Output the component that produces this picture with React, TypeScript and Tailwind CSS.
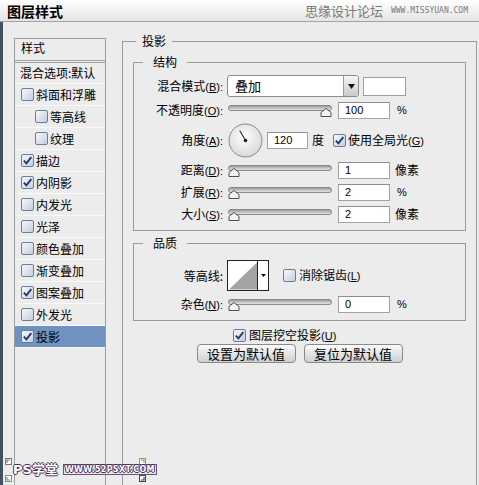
import React from 'react';

// Photoshop "图层样式" dialog — 投影 page

function Check({ on }: { on?: boolean }) {
  return (
    <span className="w-[13px] h-[13px] shrink-0 rounded-[2px] border border-[#6b7d97] bg-linear-to-br from-[#f7f9fc] to-[#c3cede] flex items-center justify-center">
      {on && (
        <svg width="11" height="11" viewBox="0 0 11 11">
          <path d="M1.8 5.6 L4.4 8.3 L9.3 2.2" fill="none" stroke="#22396a" strokeWidth="1.9" />
        </svg>
      )}
    </span>
  );
}

function Key({ k }: { k: string }) {
  return (
    <span className="text-[11px] font-['Liberation_Sans',sans-serif]">
      (<span className="underline">{k}</span>):
    </span>
  );
}

function Slider({ pos }: { pos: number }) {
  const x = 6 + pos * 92;
  return (
    <svg width="104" height="16" viewBox="0 0 104 16" className="ml-[5px] shrink-0">
      <defs>
        <linearGradient id="trk" x1="0" y1="0" x2="0" y2="1">
          <stop offset="0" stopColor="#8e8e8e" />
          <stop offset="0.5" stopColor="#c4c4c4" />
          <stop offset="1" stopColor="#e6e6e6" />
        </linearGradient>
      </defs>
      <rect x="0.5" y="3.5" width="103" height="5" rx="2.5" fill="url(#trk)" stroke="#8a8a8a" />
      <path d={`M${x} 6.5 L${x + 5} 10.5 L${x + 5} 14.5 L${x - 5} 14.5 L${x - 5} 10.5 Z`} fill="#f3f3f3" stroke="#4f4f4f" />
    </svg>
  );
}

function Field({ value, w = 'w-[52px]' }: { value: string; w?: string }) {
  return (
    <div className={`${w} h-[17px] shrink-0 bg-white border border-[#a3a3a3] border-t-[#8e8e8e] pl-[6px] flex items-center text-[11px] font-['Liberation_Sans',sans-serif]`}>
      {value}
    </div>
  );
}

function Label({ children }: { children: React.ReactNode }) {
  return <div className="w-[81px] shrink-0 text-right whitespace-nowrap">{children}</div>;
}

function SliderRow({ label, k, pos, value, unit }: { label: string; k: string; pos: number; value: string; unit: string }) {
  return (
    <div className="flex items-center h-[18px] mt-[4px]">
      <Label>
        {label}
        <Key k={k} />
      </Label>
      <Slider pos={pos} />
      <div className="ml-[6px]">
        <Field value={value} />
      </div>
      <span className={unit === '%' ? "ml-[7px] text-[11px] font-['Liberation_Sans',sans-serif]" : 'ml-[5px]'}>{unit}</span>
    </div>
  );
}

function Dial() {
  return (
    <svg width="35" height="35" viewBox="0 0 35 35" className="ml-[5px] shrink-0">
      <defs>
        <radialGradient id="dial" cx="0.45" cy="0.4" r="0.7">
          <stop offset="0" stopColor="#ffffff" />
          <stop offset="1" stopColor="#d2d2d2" />
        </radialGradient>
      </defs>
      <circle cx="17.5" cy="17.5" r="16.5" fill="url(#dial)" stroke="#8a8a8a" />
      <line x1="17.5" y1="17.5" x2="11.7" y2="7.5" stroke="#333" strokeWidth="1.2" />
      <circle cx="17.5" cy="17.5" r="1.8" fill="#222" />
    </svg>
  );
}

const styles: { label: string; on?: boolean; indent?: boolean; active?: boolean }[] = [
  { label: '斜面和浮雕' },
  { label: '等高线', indent: true },
  { label: '纹理', indent: true },
  { label: '描边', on: true },
  { label: '内阴影', on: true },
  { label: '内发光' },
  { label: '光泽' },
  { label: '颜色叠加' },
  { label: '渐变叠加' },
  { label: '图案叠加', on: true },
  { label: '外发光' },
  { label: '投影', on: true, active: true },
];

function LeftPanel() {
  return (
    <div className="mt-[16px] w-[92px] h-[460px] shrink-0 border border-[#9c9c9c]">
      <div className="h-[24px] pl-[6px] pb-[3px] flex items-center border-b-[3px] border-double border-[#a2a2a2]">样式</div>
      <div className="h-[21px] pl-[5px] flex items-center border-b border-[#fafafa] whitespace-nowrap">混合选项:默认</div>
      {styles.map((s) => (
        <div
          key={s.label}
          className={`h-[22px] flex items-center gap-[2px] border-b border-[#fafafa] ${s.indent ? 'pl-[20px]' : 'pl-[6px]'} ${s.active ? 'bg-[#6f92c0]' : ''}`}
        >
          <Check on={s.on} />
          <span>{s.label}</span>
        </div>
      ))}
    </div>
  );
}

function RightPanel() {
  return (
    <fieldset className="ml-[16px] mt-[11px] w-[355px] h-[470px] shrink-0 border border-[#9b9b9b] px-[10px] min-w-0">
      <legend className="ml-[3px] px-[6px] leading-[16px]">投影</legend>

      <fieldset className="mt-[5px] border border-[#9b9b9b] pl-[8px] pr-[8px] pb-[7px] min-w-0">
        <legend className="ml-[1px] px-[10px] leading-[16px]">结构</legend>

        <div className="flex items-center h-[22px] mt-[5px]">
          <Label>
            混合模式<Key k="B" />
          </Label>
          <div className="ml-[4px] w-[132px] h-[22px] shrink-0 flex border border-[#8c8c8c] rounded-[3px] bg-white overflow-hidden">
            <div className="flex-1 pl-[7px] flex items-center text-[13px]">叠加</div>
            <div className="w-[15px] border-l border-[#9a9a9a] bg-linear-to-b from-[#f6f6f6] to-[#c9c9c9] flex items-center justify-center">
              <svg width="7" height="5" viewBox="0 0 7 5">
                <path d="M0 0 L7 0 L3.5 5 Z" fill="#111" />
              </svg>
            </div>
          </div>
          <div className="ml-[4px] w-[43px] h-[19px] bg-white border border-[#9d9d9d]" />
        </div>

        <div className="flex items-center h-[18px] mt-[4px]">
          <Label>
            不透明度<Key k="O" />
          </Label>
          <Slider pos={1} />
          <div className="ml-[6px]">
            <Field value="100" />
          </div>
          <span className="ml-[7px] text-[11px] font-['Liberation_Sans',sans-serif]">%</span>
        </div>

        <div className="flex items-center h-[34px] mt-[4px]">
          <Label>
            角度<Key k="A" />
          </Label>
          <Dial />
          <div className="ml-[4px]">
            <Field value="120" w="w-[41px]" />
          </div>
          <span className="ml-[4px]">度</span>
          <div className="ml-[9px] flex items-center gap-[2px]">
            <Check on />
            <span>
              使用全局光
              <span className="text-[11px] font-['Liberation_Sans',sans-serif]">
                (<span className="underline">G</span>)
              </span>
            </span>
          </div>
        </div>

        <div className="mt-[1px]">
          <SliderRow label="距离" k="D" pos={0} value="1" unit="像素" />
          <SliderRow label="扩展" k="R" pos={0} value="2" unit="%" />
          <SliderRow label="大小" k="S" pos={0} value="2" unit="像素" />
        </div>
      </fieldset>

      <fieldset className="mt-[4px] border border-[#9b9b9b] pl-[8px] pr-[8px] pb-[7px] min-w-0">
        <legend className="ml-[1px] px-[10px] leading-[16px]">品质</legend>

        <div className="flex items-center h-[31px] mt-[9px]">
          <Label>等高线:</Label>
          <div className="ml-[4px] w-[42px] h-[31px] shrink-0 border border-[#222] bg-white flex">
            <svg width="30" height="29" viewBox="0 0 30 29" className="border-r border-[#222]">
              <path d="M1 29 L30 1 L30 29 Z" fill="#a3a3a3" />
            </svg>
            <div className="flex-1 flex items-center justify-center">
              <svg width="5" height="3" viewBox="0 0 5 3">
                <path d="M0 0 L5 0 L2.5 3 Z" fill="#111" />
              </svg>
            </div>
          </div>
          <div className="ml-[14px] flex items-center gap-[3px]">
            <Check />
            <span>
              消除锯齿
              <span className="text-[11px] font-['Liberation_Sans',sans-serif]">
                (<span className="underline">L</span>)
              </span>
            </span>
          </div>
        </div>

        <div className="mt-[1px]">
          <SliderRow label="杂色" k="N" pos={0} value="0" unit="%" />
        </div>
      </fieldset>

      <div className="ml-[100px] mt-[6px] h-[16px] flex items-center gap-[3px]">
        <Check on />
        <span>
          图层挖空投影
          <span className="text-[11px] font-['Liberation_Sans',sans-serif]">
            (<span className="underline">U</span>)
          </span>
        </span>
      </div>

      <div className="mt-[1px] flex justify-center gap-[8px]">
        {['设置为默认值', '复位为默认值'].map((b) => (
          <div
            key={b}
            className="w-[99px] h-[19px] rounded-[4px] border border-[#8a8a8a] bg-linear-to-b from-[#fbfbfb] to-[#cfcfcf] flex items-center justify-center text-[13px] leading-none"
          >
            {b}
          </div>
        ))}
      </div>
    </fieldset>
  );
}

function Corner({ rot, color }: { rot: string; color: string }) {
  return (
    <svg width="7" height="7" viewBox="0 0 7 7" className={rot}>
      <rect x="0.5" y="0.5" width="6" height="6" fill="#fff" stroke={color} />
      <path d="M2 5 L2 2 L5 2" fill="none" stroke={color} strokeWidth="1.2" />
    </svg>
  );
}

function Watermark() {
  return (
    <div className="absolute left-[5px] top-[458px] w-[141px] h-[24px] font-['DejaVu_Sans','Noto_Sans_CJK_SC',sans-serif]">
      <div className="absolute left-0 top-0 flex">
        <Corner rot="" color="#8a6f6f" />
      </div>
      <div className="absolute left-0 bottom-0 flex">
        <Corner rot="-rotate-90" color="#6f9a6a" />
      </div>
      <div className="absolute right-0 top-0 flex">
        <Corner rot="rotate-90" color="#9c9a4e" />
      </div>
      <div className="absolute right-0 bottom-0 flex">
        <Corner rot="rotate-180" color="#444" />
      </div>
      <div className="absolute left-[8px] top-[5px] flex items-center gap-[5px] whitespace-nowrap">
        <span className="text-[13px] font-bold leading-none whitespace-nowrap text-white [text-shadow:1px_0_#4a2c5a,-1px_0_#4a2c5a,0_1px_#4a2c5a,0_-1px_#4a2c5a]">
          PS学堂
        </span>
        <span className="px-[1px] border border-[#6b5577] bg-[#e6e0ea] text-[8px] font-bold leading-[9px] whitespace-nowrap text-white tracking-[0.3px] [text-shadow:1px_0_#4a2c5a,-1px_0_#4a2c5a,0_1px_#4a2c5a,0_-1px_#4a2c5a]">
          WWW.52PSXT.COM
        </span>
      </div>
    </div>
  );
}

export default function App() {
  return (
    <div className="w-[479px] h-[485px] bg-[#ececec] overflow-hidden relative flex flex-col text-[12px] text-black font-['Noto_Sans_CJK_SC','Noto_Sans',sans-serif]">
      <div className="h-[22px] shrink-0 border-b border-[#a3a3a3] bg-linear-to-b from-white to-[#e4e4e4] flex items-center justify-between pl-[7px] pr-[11px]">
        <span className="text-[14px] font-bold leading-none">图层样式</span>
        <div className="flex items-center gap-[8px] text-[#7a7a7a]">
          <span className="text-[13px] leading-none">思缘设计论坛</span>
          <span className="text-[8px] leading-none font-['DejaVu_Sans_Mono',monospace]">WWW.MISSYUAN.COM</span>
        </div>
      </div>
      <div className="flex-1 flex items-start border-l-[3px] border-[#40525d] pl-[11px]">
        <LeftPanel />
        <RightPanel />
      </div>
      <Watermark />
    </div>
  );
}
